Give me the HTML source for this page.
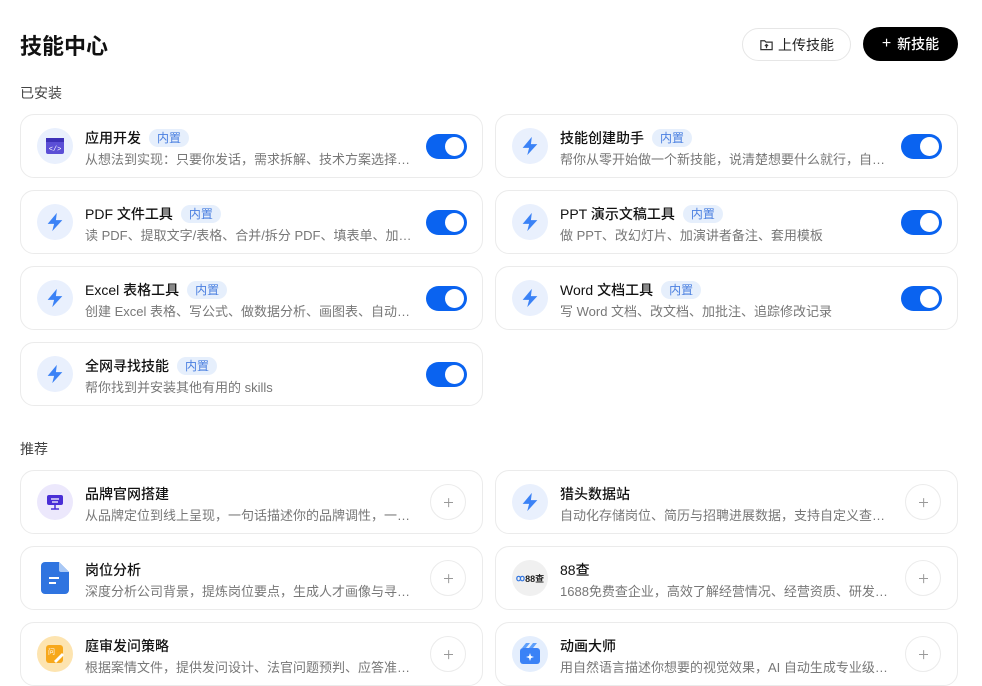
<!DOCTYPE html>
<html><head><meta charset="utf-8"><style>
*{box-sizing:border-box;margin:0;padding:0}
body{width:982px;height:682px;overflow:hidden;background:#fff;font-family:"Liberation Sans","Noto Sans CJK SC",sans-serif;color:#111;position:relative}
.h1{position:absolute;left:20px;top:29px;font-size:22px;font-weight:600}
.btn1{position:absolute;left:742px;top:28px;width:109px;height:33px;border:1px solid #e6e6e6;border-radius:17px;font-size:14px;display:flex;align-items:center;justify-content:center;gap:4px;color:#222}
.btn2{position:absolute;left:863px;top:27px;width:95px;height:34px;background:#000;color:#fff;border-radius:17px;font-size:14px;display:flex;align-items:center;justify-content:center;gap:6px;font-weight:500}
.sec{position:absolute;left:20px;font-size:14px;color:#444}
.card{position:absolute;width:463px;height:64px;border:1px solid #ebebeb;border-radius:14px}
.ic{position:absolute;left:16px;top:13px;width:36px;height:36px;border-radius:50%;background:#e9f0fd;display:flex;align-items:center;justify-content:center}
.t{position:absolute;left:64px;top:13px;font-size:14px;font-weight:500;display:flex;align-items:center;gap:8px;white-space:nowrap}
.tag{font-size:12px;font-weight:400;color:#4a7fe0;background:#e6effc;border-radius:9px;padding:1px 8px;line-height:16px}
.d{position:absolute;left:64px;top:34px;font-size:13px;color:#777;white-space:nowrap;width:330px;overflow:hidden;text-overflow:ellipsis}
.tg{position:absolute;left:405px;top:19px;width:41px;height:25px;border-radius:13px;background:#0a63f0}
.tg:after{content:"";position:absolute;right:3px;top:3px;width:19px;height:19px;border-radius:50%;background:#fff}
.pl{position:absolute;left:409px;top:13px;width:36px;height:36px;border-radius:50%;border:1px solid #ebebeb}
.pl:before,.pl:after{content:"";position:absolute;left:13px;top:17px;width:9px;height:1.3px;background:#999}
.pl:after{transform:rotate(90deg)}
</style></head><body>
<div class="h1">技能中心</div>
<div class="btn1"><svg width="15" height="15" viewBox="0 0 16 16" fill="none" stroke="#333" stroke-width="1.3"><path d="M2 4h4l1.5 1.5H14v8H2z"/><path d="M8 12V8M6.3 9.6 8 8l1.7 1.6"/></svg>上传技能</div>
<div class="btn2"><span style="font-weight:400;font-size:16px">+</span>新技能</div>
<div class="sec" style="top:83px">已安装</div>
<div class="sec" style="top:439px">推荐</div>
<svg width="0" height="0" style="position:absolute"><defs><symbol id="b" viewBox="0 0 24 24"><path d="M14 2 4 14h7l-2 8 11-12h-7z" fill="#3b82f6"/></symbol></defs></svg>

<div class="card" style="left:20px;top:114px"><div class="ic"><svg width="20" height="20" viewBox="0 0 20 20"><rect x="1" y="2" width="18" height="16" rx="2" fill="#5b4fd6"/><rect x="1" y="2" width="18" height="4" fill="#3d31b8"/><text x="10" y="15" font-size="7" fill="#fff" text-anchor="middle" font-family="Liberation Mono">&lt;/&gt;</text></svg></div><div class="t">应用开发<span class="tag">内置</span></div><div class="d">从想法到实现：只要你发话，需求拆解、技术方案选择、代码实现</div><div class="tg"></div></div>
<div class="card" style="left:495px;top:114px"><div class="ic"><svg width="22" height="22"><use href="#b"/></svg></div><div class="t">技能创建助手<span class="tag">内置</span></div><div class="d">帮你从零开始做一个新技能，说清楚想要什么就行，自动生成</div><div class="tg"></div></div>
<div class="card" style="left:20px;top:190px"><div class="ic"><svg width="22" height="22"><use href="#b"/></svg></div><div class="t">PDF 文件工具<span class="tag">内置</span></div><div class="d">读 PDF、提取文字/表格、合并/拆分 PDF、填表单、加水印等</div><div class="tg"></div></div>
<div class="card" style="left:495px;top:190px"><div class="ic"><svg width="22" height="22"><use href="#b"/></svg></div><div class="t">PPT 演示文稿工具<span class="tag">内置</span></div><div class="d">做 PPT、改幻灯片、加演讲者备注、套用模板</div><div class="tg"></div></div>
<div class="card" style="left:20px;top:266px"><div class="ic"><svg width="22" height="22"><use href="#b"/></svg></div><div class="t">Excel 表格工具<span class="tag">内置</span></div><div class="d">创建 Excel 表格、写公式、做数据分析、画图表、自动化处理</div><div class="tg"></div></div>
<div class="card" style="left:495px;top:266px"><div class="ic"><svg width="22" height="22"><use href="#b"/></svg></div><div class="t">Word 文档工具<span class="tag">内置</span></div><div class="d">写 Word 文档、改文档、加批注、追踪修改记录</div><div class="tg"></div></div>
<div class="card" style="left:20px;top:342px"><div class="ic"><svg width="22" height="22"><use href="#b"/></svg></div><div class="t">全网寻找技能<span class="tag">内置</span></div><div class="d">帮你找到并安装其他有用的 skills</div><div class="tg"></div></div>

<div class="card" style="left:20px;top:470px"><div class="ic" style="background:#ece8fc"><svg width="20" height="20" viewBox="0 0 20 20"><rect x="2" y="3" width="16" height="10" rx="2" fill="#4a2fd6"/><path d="M6 7h8M7 10h6" stroke="#fff" stroke-width="1.3"/><path d="M10 13v4M6 17h8" stroke="#4a2fd6" stroke-width="1.5"/></svg></div><div class="t">品牌官网搭建</div><div class="d">从品牌定位到线上呈现，一句话描述你的品牌调性，一键生成</div><div class="pl"></div></div>
<div class="card" style="left:495px;top:470px"><div class="ic"><svg width="22" height="22"><use href="#b"/></svg></div><div class="t">猎头数据站</div><div class="d">自动化存储岗位、简历与招聘进展数据，支持自定义查询分析</div><div class="pl"></div></div>
<div class="card" style="left:20px;top:546px"><div class="ic" style="background:none"><svg width="28" height="32" viewBox="0 0 28 32"><path d="M4 0h14l10 10v18a4 4 0 0 1-4 4H4a4 4 0 0 1-4-4V4a4 4 0 0 1 4-4z" fill="#2f74e0"/><path d="M18 0v8a2 2 0 0 0 2 2h8z" fill="#a9c8f5"/><path d="M8 16h10M8 21h7" stroke="#fff" stroke-width="2"/></svg></div><div class="t">岗位分析</div><div class="d">深度分析公司背景，提炼岗位要点，生成人才画像与寻访策略</div><div class="pl"></div></div>
<div class="card" style="left:495px;top:546px"><div class="ic" style="background:#f0f0f0;font-size:9px;font-weight:700;color:#222"><span style="color:#2f74e0">ꝏ</span>88查</div><div class="t">88查</div><div class="d">1688免费查企业，高效了解经营情况、经营资质、研发能力等</div><div class="pl"></div></div>
<div class="card" style="left:20px;top:622px"><div class="ic" style="background:#fde4b0"><svg width="22" height="22" viewBox="0 0 22 22"><rect x="2" y="2" width="17" height="18" rx="3" fill="#f7a81b"/><text x="4" y="11" font-size="7" fill="#fff">问</text><path d="M10 18l8-8 2 2-8 8z" fill="#fff"/></svg></div><div class="t">庭审发问策略</div><div class="d">根据案情文件，提供发问设计、法官问题预判、应答准备建议</div><div class="pl"></div></div>
<div class="card" style="left:495px;top:622px"><div class="ic" style="background:#e4eefd"><svg width="24" height="24" viewBox="0 0 24 24"><rect x="2" y="6" width="20" height="16" rx="3" fill="#3b82f6"/><path d="M4 6l4-5h4l-4 5M11 6l4-5h4l-4 5" fill="#5fa0fb"/><path d="M12 11l1 3 3 1-3 1-1 3-1-3-3-1 3-1z" fill="#fff"/></svg></div><div class="t">动画大师</div><div class="d">用自然语言描述你想要的视觉效果，AI 自动生成专业级动画</div><div class="pl"></div></div>
</body></html>
